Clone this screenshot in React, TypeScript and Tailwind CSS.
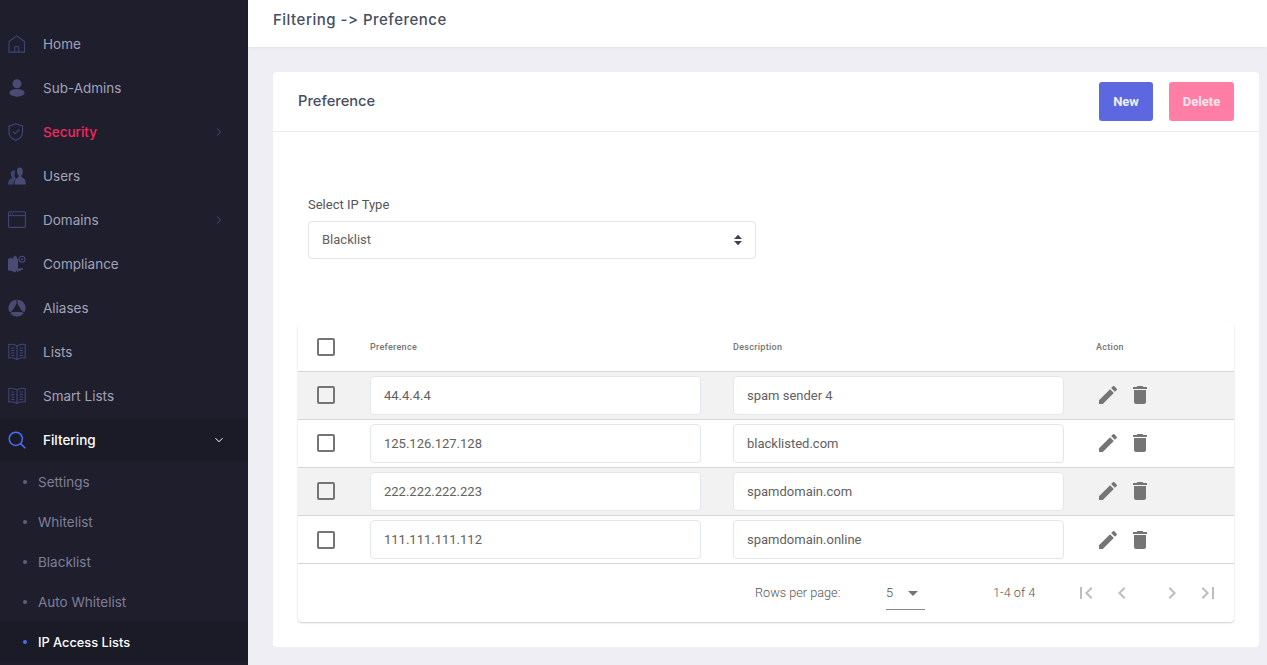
import React from "react";

const iconCls = "w-[18px] h-[18px] text-[#494b74] fill-current";

const Home = () => (
  <svg viewBox="0 0 18 18" className={iconCls}>
    <path fill="none" stroke="#3f4577" strokeWidth="1.1" d="M1 6.500 8.800.9l7.700 5.600v10.600H1zM6.700 17v-5.200h4V17" />
  </svg>
);
const Admin = () => (
  <svg viewBox="0 0 18 18" className={iconCls}>
    <circle cx="9" cy="4.800" r="4.500" />
    <ellipse cx="9" cy="13.800" rx="7.600" ry="3.900" />
  </svg>
);
const Shield = () => (
  <svg viewBox="0 0 18 18" className={iconCls}>
    <path fill="none" stroke="#3f4577" strokeWidth="1.200" d="M7.800.8 14.500 3v6.500c0 4-3.700 6.600-6.700 7.700C4.800 16.100 1 13.500 1 9.500V3z" />
    <path fill="none" stroke="#3f4577" strokeWidth="1.100" d="m4.800 8.500 2.300 2.300 4.200-4.300" />
  </svg>
);
const UsersI = () => (
  <svg viewBox="0 0 18 18" className={iconCls}>
    <path fill="#3f4270" d="M5.500 3.500c-2 0-3 1.500-2.800 3.500.1 1.300.6 2.500 1.300 3.200 0 .9-.7 1.300-1.700 1.800C.7 12.800.2 14.500 0 17.500h5.500c.1-2.500.8-4.300 2.500-5.500-1-1.500-1.500-3-1.300-5.500 0-1 .2-2 .6-2.600-.5-.3-1-.4-1.700-.4z" />
    <path d="M11.500.5c2.600 0 3.700 2 3.300 4.700-.2 1.600-.8 2.900-1.500 3.600 0 1.100.8 1.600 1.900 2.100 1.900.9 2.500 3 2.700 6.600H6.500c.1-3.500.8-5.500 2.600-6.500 1-.6 1.700-1 1.700-2.200-.8-.8-1.500-2.100-1.700-3.600C8.700 2.500 9.500.5 11.500.5z" />
  </svg>
);
const Windowed = () => (
  <svg viewBox="0 0 18 18" className={iconCls}>
    <rect x=".6" y=".8" width="16.800" height="15.600" rx="1" fill="none" stroke="#3f4577" strokeWidth="1.100" />
    <path fill="none" stroke="#3f4577" strokeWidth="1.100" d="M.6 4.600h16.800" />
    <path fill="none" stroke="#3f4577" strokeWidth="1" strokeDasharray="1 1" d="M2 2.700h4" />
  </svg>
);
const Compliance = () => (
  <svg viewBox="0 0 18 18" className={iconCls}>
    <path d="M0 4 3 2.500l1 1.500 3-3.500 2 1.500v13L7 17.500 4 16 0 15.500z" />
    <path d="M10 4v9.500l5-.5v1.500L10 16.500l-1 1V4z" />
    <circle cx="14" cy="4.300" r="3" fill="none" stroke="currentColor" strokeWidth="1.100" />
    <circle cx="14" cy="4.300" r="1" />
  </svg>
);
const Aliases = () => (
  <svg viewBox="0 0 18 18" className={iconCls}>
    <circle cx="9" cy="9" r="8.600" />
    <path d="M9 5.500 13 12.200H5z" fill="#1e1e2d" stroke="#1e1e2d" strokeWidth="1.500" strokeLinejoin="round" />
    <path d="M9 6V0M5 12 .4 14.500M13 12l4.600 2.500" stroke="#1e1e2d" strokeWidth="1" fill="none" />
  </svg>
);
const Book = () => (
  <svg viewBox="0 0 18 18" className={iconCls}>
    <path fill="none" stroke="#3f4577" strokeWidth="1.100" d="M9 3C7 1.500 3 1 .8 1.500v13.500C3 14.600 7 15 9 16.500c2-1.500 6-1.900 8.200-1.500V1.500C15 1 11 1.500 9 3zM9 3v13.500M3 5h3.500M3 7.500h3.500M3 10h3.500M3 12.500h3.500M11.500 5H15M11.500 7.500H15M11.500 10H15M11.500 12.500H15" />
  </svg>
);
const Search = () => (
  <svg viewBox="0 0 18 18" className="w-[18px] h-[18px] text-[#4a6cf7]">
    <circle cx="7.800" cy="7.800" r="6.600" fill="none" stroke="currentColor" strokeWidth="1.500" />
    <path d="m12.600 12.600 4.700 4.700" fill="none" stroke="currentColor" strokeWidth="1.500" />
  </svg>
);
const Chevron = ({ down, color }: { down?: boolean; color: string }) => (
  <svg viewBox="0 0 10 10" className="w-[10px] h-[10px]" style={{ color }}>
    <path d={down ? "M1.500 3.200 5 6.800l3.500-3.600" : "M3.200 1.500 6.800 5 3.200 8.500"} fill="none" stroke="currentColor" strokeWidth="1" />
  </svg>
);

const menu = [
  { label: "Home", Icon: Home },
  { label: "Sub-Admins", Icon: Admin },
  { label: "Security", Icon: Shield, chevron: true, red: true },
  { label: "Users", Icon: UsersI },
  { label: "Domains", Icon: Windowed, chevron: true },
  { label: "Compliance", Icon: Compliance },
  { label: "Aliases", Icon: Aliases },
  { label: "Lists", Icon: Book },
  { label: "Smart Lists", Icon: Book },
];

const subs = ["Settings", "Whitelist", "Blacklist", "Auto Whitelist"];

const rows = [
  ["44.4.4.4", "spam sender 4", true],
  ["125.126.127.128", "blacklisted.com", false],
  ["222.222.222.223", "spamdomain.com", true],
  ["111.111.111.112", "spamdomain.online", false],
] as const;

const Mui = ({ d, className }: { d: string; className: string }) => (
  <svg viewBox="0 0 24 24" className={className + " fill-current"}>
    <path d={d} />
  </svg>
);

const poppins = "font-['Inter','Noto_Sans',sans-serif]";
const roboto = "font-['Roboto','Liberation_Sans',sans-serif]";
const grid = "grid grid-cols-[72px_363px_363px_1fr] items-center";

export default function App() {
  return (
    <div className={`flex h-[665px] w-[1267px] overflow-hidden bg-[#eeeef4] ${roboto}`}>
      <aside className={`w-[248px] shrink-0 bg-[#1e1e2d] pt-[22px] ${poppins}`}>
        {menu.map(({ label, Icon, chevron, red }) => (
          <div key={label} className="flex h-[44px] items-center pl-[7.500px] pr-[24px]">
            <Icon />
            <span className={`ml-[17.500px] flex-1 text-[13.500px] ${red ? "font-medium text-[#f1285d]" : "text-[#a2a3b7]"}`}>
              {label}
            </span>
            {chevron && <Chevron color="#494b74" />}
          </div>
        ))}
        <div className="flex h-[44px] items-center bg-[#1b1b28] pl-[7.500px] pr-[24px]">
          <Search />
          <span className="ml-[17.500px] flex-1 text-[13.500px] font-medium text-white">Filtering</span>
          <Chevron down color="#ffffff" />
        </div>
        {subs.map((s) => (
          <div key={s} className="flex h-[40px] items-center pl-[23px]">
            <span className="h-[4px] w-[4px] rounded-full bg-[#5e6085]" />
            <span className="ml-[11px] text-[13.500px] text-[#7e7f9a]">{s}</span>
          </div>
        ))}
        <div className="flex h-[40px] items-center bg-[#1b1b28] pl-[23px]">
          <span className="h-[4px] w-[4px] rounded-full bg-[#4a6cf7]" />
          <span className="ml-[11px] pt-[2px] text-[12.800px] font-medium text-white">IP Access Lists</span>
        </div>
      </aside>

      <main className="min-w-0 flex-1">
        <header className="flex h-[47px] items-start bg-white pl-[25px] pt-[9px] shadow-[0_1px_4px_rgba(0,0,0,0.05)]">
          <h1 className={`text-[15px] font-medium leading-[21px] tracking-[0.5px] text-[#464e5f] ${poppins}`}>
            Filtering -&gt; Preference
          </h1>
        </header>

        <section className="ml-[25px] mr-[8px] mt-[25px] h-[575px] rounded-[4px] bg-white">
          <div className="flex h-[60px] items-center justify-between border-b border-[#ebedf3] pl-[25px] pr-[25px]">
            <h2 className={`text-[14.700px] font-medium text-[#464e5f] ${poppins}`}>Preference</h2>
            <div className="flex gap-[16px]">
              <button className="h-[39px] w-[54px] rounded-[3px] bg-[#5d67e0] text-[13px] font-bold text-[#eef0ff]">New</button>
              <button className="h-[39px] w-[65px] rounded-[3px] bg-[#ff7ea6] text-[13px] font-bold text-[#ffe6ee]">Delete</button>
            </div>
          </div>

          <div className="px-[35px] pt-[65px]">
            <label className="block text-[13px] leading-[15px] text-[#555555]">Select IP Type</label>
            <div className="mt-[9px] flex h-[38px] w-[448px] items-center justify-between rounded-[4px] border border-[#e4e6ef] pl-[13px] pr-[13px] text-[13px] text-[#616161]">
              <span>Blacklist</span>
              <svg viewBox="0 0 8 12" className="h-[12px] w-[8px] fill-[#3f4254]">
                <path d="M4 .8 8 5H0zM4 11.200 0 7h8z" />
              </svg>
            </div>
          </div>

          <div className="ml-[25px] mt-[64px] w-[936px] rounded-[4px] bg-white shadow-[0_1px_2px_rgba(0,0,0,0.2)]">
            <div className={`${grid} h-[49px] border-b border-[#d6d6d6]`}>
              <input type="checkbox" readOnly className="ml-[19px] h-[18px] w-[18px] appearance-none rounded-[2px] border-2 border-[#757575]" />
              <span className="pt-[2px] text-[9px] font-medium tracking-[0.3px] text-[#757575]">Preference</span>
              <span className="pt-[2px] text-[9px] font-medium tracking-[0.3px] text-[#757575]">Description</span>
              <span className="pt-[2px] text-[9px] font-medium tracking-[0.3px] text-[#757575]">Action</span>
            </div>
            {rows.map(([ip, desc, shaded], i) => (
              <div key={ip} className={`${grid} h-[48px] border-b border-[#d6d6d6] ${shaded ? "bg-[#f2f2f2]" : "bg-white"}`}>
                <input type="checkbox" readOnly className={`ml-[19px] h-[18px] w-[18px] appearance-none rounded-[2px] border-2 border-[#757575] ${i < 3 ? "mb-[2px]" : ""}`} />
                <input readOnly defaultValue={ip} className="h-[39px] w-[331px] rounded-[4px] border border-[#e4e6ef] bg-white px-[13px] text-[13px] text-[#616161] outline-none" />
                <input readOnly defaultValue={desc} className="h-[39px] w-[331px] rounded-[4px] border border-[#e4e6ef] bg-white px-[13px] text-[13px] text-[#616161] outline-none" />
                <div className={`flex gap-[8px] text-[#757575] ${i < 3 ? "mb-[2px]" : ""}`}>
                  <Mui className="h-[24px] w-[24px]" d="M3 17.250V21h3.750L17.810 9.940l-3.750-3.750L3 17.250zM20.710 7.040c.390-.390.390-1.020 0-1.410l-2.340-2.340c-.390-.390-1.020-.390-1.410 0l-1.830 1.830 3.750 3.750 1.830-1.830z" />
                  <Mui className="h-[24px] w-[24px]" d="M6 19c0 1.100.900 2 2 2h8c1.100 0 2-.900 2-2V7H6v12zM19 4h-3.500l-1-1h-5l-1 1H5v2h14V4z" />
                </div>
              </div>
            ))}
            <div className="flex h-[58px] items-center text-[12.700px] font-light text-[#555555]">
              <span className="ml-[457px] w-[131px]">Rows per page:</span>
              <div className="flex h-[33px] w-[39px] items-center justify-between border-b border-[#8a8a8a] pr-[7px] text-[#4a4a4a]">
                <span>5</span>
                <svg viewBox="0 0 10 5" className="mt-[1px] h-[5px] w-[10px] fill-[#757575]">
                  <path d="M0 0h10L5 5z" />
                </svg>
              </div>
              <span className="ml-[68px] w-[43px] whitespace-nowrap">1-4 of 4</span>
              <div className="ml-[38px] flex items-center text-[#bdbdbd]">
                <Mui className="h-[24px] w-[24px]" d="M18.410 16.590 13.820 12l4.590-4.590L17 6l-6 6 6 6zM6 6h2v12H6z" />
                <Mui className="ml-[12px] h-[24px] w-[24px]" d="M15.410 16.590 10.830 12l4.580-4.590L14 6l-6 6 6 6 1.410-1.410z" />
                <Mui className="ml-[26px] h-[24px] w-[24px]" d="M8.590 16.590 13.170 12 8.590 7.410 10 6l6 6-6 6-1.410-1.410z" />
                <Mui className="ml-[12px] h-[24px] w-[24px]" d="M5.590 7.410 10.180 12l-4.590 4.590L7 18l6-6-6-6zM16 6h2v12h-2z" />
              </div>
            </div>
          </div>
        </section>
      </main>
    </div>
  );
}
